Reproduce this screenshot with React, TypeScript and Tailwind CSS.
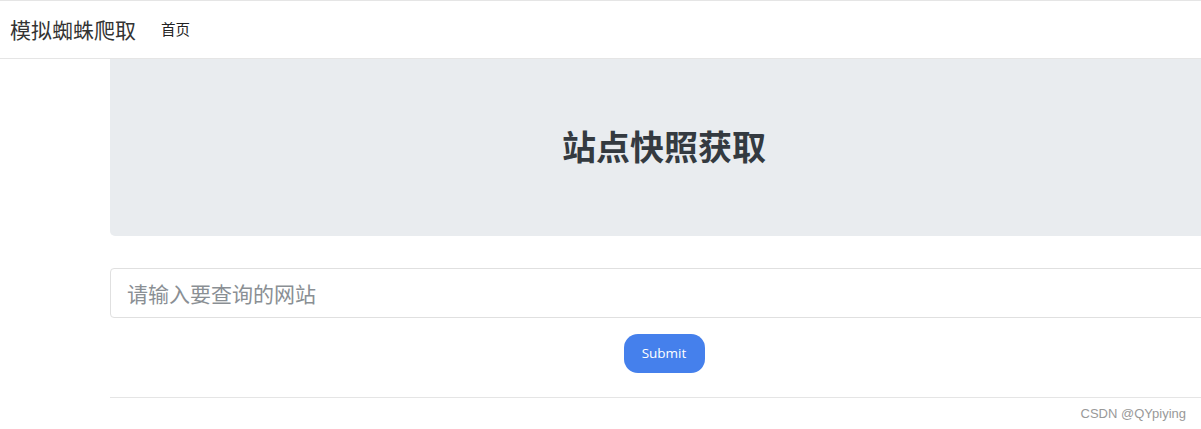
export default function App() {
  return (
    <div
      className="h-[429px] w-[1201px] overflow-hidden bg-white border-t border-[#e5e5e5]"
      style={{ fontFamily: '"Noto Sans CJK SC", "Noto Sans", sans-serif' }}
    >
      <nav className="h-[58px] flex items-center border-b border-[#e5e5e5] px-[10px]">
        <span className="text-[21px] text-[#333] leading-none">模拟蜘蛛爬取</span>
        <a className="ml-[25px] text-[14.5px] text-[#222] leading-none">首页</a>
      </nav>
      <div className="ml-[110px] w-[1108px]">
        <div className="h-[177px] bg-[#e9ecef] rounded-b-[5px] flex items-center justify-center">
          <h1 className="text-[34px] font-bold text-[#343a40] leading-none -mt-[3px]">站点快照获取</h1>
        </div>
        <div className="mt-[32px]">
          <input
            type="text"
            placeholder="请输入要查询的网站"
            className="w-full h-[50px] border border-[#e0e0e0] rounded-[4px] px-[16px] text-[21px] placeholder:text-[#8a8f94] outline-none"
          />
        </div>
        <div className="flex justify-center mt-[16px]">
          <button
            className="w-[81px] h-[39px] rounded-[14px] bg-[#4580ec] text-white text-[13.5px]"
            style={{ fontFamily: '"Open Sans", sans-serif' }}
          >
            Submit
          </button>
        </div>
        <div className="mt-[24px] border-t border-[#e5e5e5] h-[1px]" />
      </div>
      <div className="flex justify-end pr-[15px] mt-[6px]">
        <span
          className="text-[13px] text-[#999]"
          style={{ fontFamily: '"Liberation Sans", sans-serif' }}
        >
          CSDN @QYpiying
        </span>
      </div>
    </div>
  );
}
